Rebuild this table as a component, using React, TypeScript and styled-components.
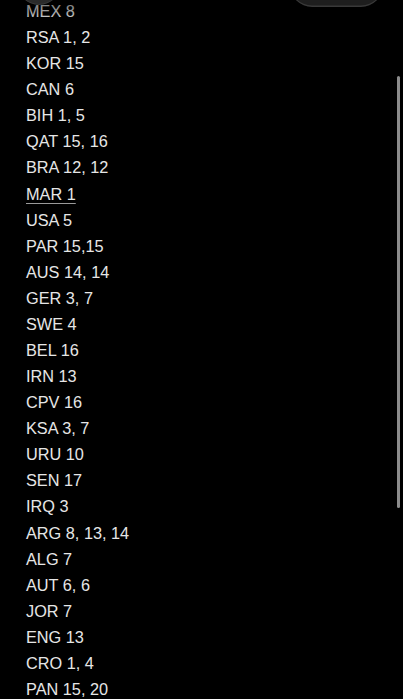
import styled, { createGlobalStyle } from "styled-components";

const GlobalStyle = createGlobalStyle`
  html, body {
    margin: 0;
    padding: 0;
    background: #000;
  }
  body {
    font-family: "Liberation Sans", Arial, sans-serif;
    overflow: hidden;
  }
`;

const entries: { text: string; marked?: boolean }[] = [
  { text: "MEX 8" },
  { text: "RSA 1, 2" },
  { text: "KOR 15" },
  { text: "CAN 6" },
  { text: "BIH 1, 5" },
  { text: "QAT 15, 16" },
  { text: "BRA 12, 12" },
  { text: "MAR 1", marked: true },
  { text: "USA 5" },
  { text: "PAR 15,15" },
  { text: "AUS 14, 14" },
  { text: "GER 3, 7" },
  { text: "SWE 4" },
  { text: "BEL 16" },
  { text: "IRN 13" },
  { text: "CPV 16" },
  { text: "KSA 3, 7" },
  { text: "URU 10" },
  { text: "SEN 17" },
  { text: "IRQ 3" },
  { text: "ARG 8, 13, 14" },
  { text: "ALG 7" },
  { text: "AUT 6, 6" },
  { text: "JOR 7" },
  { text: "ENG 13" },
  { text: "CRO 1, 4" },
  { text: "PAN 15, 20" },
];

const Screen = styled.div`
  position: relative;
  width: 403px;
  height: 699px;
  background: #000;
  overflow: hidden;
`;

const Note = styled.div`
  display: flex;
  flex-direction: column;
  padding: 0 26px;
  margin-top: -2px;
`;

const Line = styled.div<{ $marked?: boolean }>`
  font-size: 16.3px;
  line-height: 26.08px;
  height: 26.08px;
  color: #e6e6e6;
  white-space: nowrap;

  span {
    text-decoration: ${(p) => (p.$marked ? "underline" : "none")};
    text-decoration-color: #9a9a9a;
    text-decoration-thickness: 1px;
    text-underline-offset: 3px;
  }
`;

const TopFade = styled.div`
  position: absolute;
  left: 0;
  right: 0;
  top: 0;
  height: 22px;
  background: linear-gradient(
    to bottom,
    rgba(0, 0, 0, 0.55),
    rgba(0, 0, 0, 0.25) 60%,
    rgba(0, 0, 0, 0)
  );
  pointer-events: none;
`;

const BackButton = styled.div`
  position: absolute;
  left: 17px;
  top: -39px;
  width: 44px;
  height: 44px;
  border-radius: 50%;
  background: #2a2a2a;
  box-shadow: inset 0 -1px 0 rgba(255, 255, 255, 0.08);
`;

const ToolbarPill = styled.div`
  position: absolute;
  left: 290px;
  top: -37px;
  width: 93px;
  height: 44px;
  border-radius: 22px;
  background: #1e1e1e;
  box-shadow: inset 0 -1.5px 0 rgba(255, 255, 255, 0.12);
`;

const Scrollbar = styled.div`
  position: absolute;
  left: 397px;
  top: 76px;
  width: 3px;
  height: 432px;
  border-radius: 2px;
  background: #8c8c8c;
`;

export default function App() {
  return (
    <>
      <GlobalStyle />
      <Screen>
        <Note>
          {entries.map((e, i) => (
            <Line key={i} $marked={e.marked}>
              <span>{e.text}</span>
            </Line>
          ))}
        </Note>
        <TopFade />
        <BackButton />
        <ToolbarPill />
        <Scrollbar />
      </Screen>
    </>
  );
}
